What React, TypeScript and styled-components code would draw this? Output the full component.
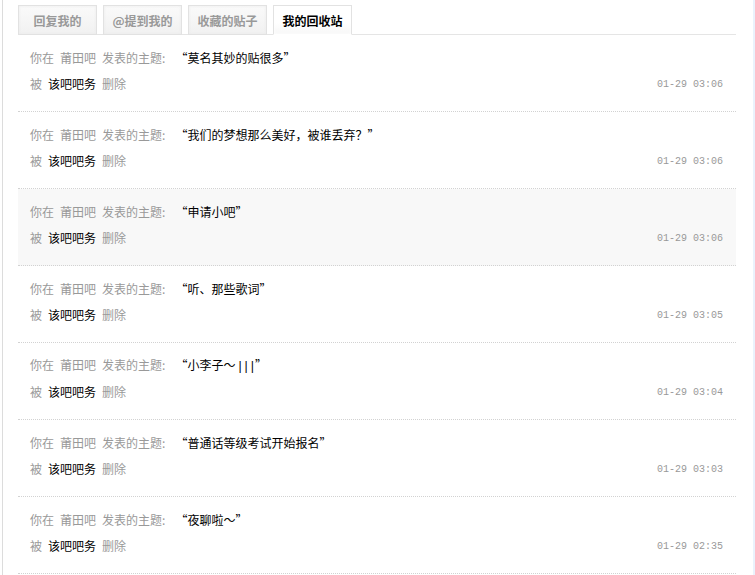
import type { ReactNode } from "react";
import styled, { createGlobalStyle } from "styled-components";

const GlobalStyle = createGlobalStyle`
  body {
    margin: 0;
    background: #fff;
    font-family: "Noto Sans CJK SC", "Noto Sans", sans-serif;
    font-size: 12px;
  }
`;

const Page = styled.div`
  display: flex;
  height: 575px;
  overflow: hidden;
`;

const Main = styled.div`
  margin-left: 2px;
  width: 718px;
  border-left: 1px solid #dcdcdc;
  padding: 0 16px 0 15px;
`;

const Side = styled.div`
  flex: 1;
  background: #eaf2fc;
  margin-left: 1px;
`;

const Tabs = styled.div`
  display: flex;
  gap: 6px;
  padding-top: 5px;
  border-bottom: 1px solid #e5e5e5;
`;

const Tab = styled.div<{ $active?: boolean }>`
  width: 77px;
  height: 28px;
  margin-bottom: -1px;
  border: 1px solid #e2e2e2;
  border-bottom-color: ${(p) => (p.$active ? "#fff" : "#e2e2e2")};
  background: ${(p) =>
    p.$active
      ? "linear-gradient(#fff, #fff 60%, #f7f7f7)"
      : "linear-gradient(#fafafa, #f1f1f1)"};
  box-shadow: inset 0 0 3px ${(p) => (p.$active ? "#fff" : "#eaeaea")};
  display: flex;
  align-items: center;
  justify-content: center;
  font-weight: bold;
  color: ${(p) => (p.$active ? "#000" : "#999")};
`;

const Row = styled.div<{ $hover?: boolean }>`
  padding: 10px 13px 14px 12px;
  border-bottom: 1px dotted #d2d2d2;
  background: ${(p) => (p.$hover ? "#f8f8f8" : "#fff")};
`;

const Line = styled.div`
  height: 26px;
  line-height: 26px;
  display: flex;
  align-items: center;
  justify-content: space-between;
  color: #999;
  white-space: nowrap;
`;

const Gray = styled.span`
  color: #999;
  margin-right: 6px;
`;

const Dark = styled.span`
  color: #000;
  margin-right: 6px;
`;

const Title = styled.span`
  color: #000;
  margin-left: 4px;
`;

const Pipes = styled.span`
  font-family: "Liberation Mono", monospace;
  font-size: 12px;
  letter-spacing: -1px;
  margin-left: 1px;
`;

const Time = styled.span`
  font-family: "Liberation Mono", "DejaVu Sans Mono", monospace;
  font-size: 10px;
  color: #999;
  position: relative;
  top: 1px;
`;

const items: { title: ReactNode; time: string; hover?: boolean }[] = [
  { title: "莫名其妙的贴很多", time: "01-29 03:06" },
  { title: "我们的梦想那么美好，被谁丢弃？", time: "01-29 03:06" },
  { title: "申请小吧", time: "01-29 03:06", hover: true },
  { title: "听、那些歌词", time: "01-29 03:05" },
  {
    title: (
      <>
        小李子～<Pipes>|||</Pipes>
      </>
    ),
    time: "01-29 03:04",
  },
  { title: "普通话等级考试开始报名", time: "01-29 03:03" },
  { title: "夜聊啦～", time: "01-29 02:35" },
];

export default function App() {
  return (
    <Page>
      <GlobalStyle />
      <Main>
        <Tabs>
          <Tab>回复我的</Tab>
          <Tab>@提到我的</Tab>
          <Tab>收藏的贴子</Tab>
          <Tab $active>我的回收站</Tab>
        </Tabs>
        {items.map((it, i) => (
          <Row key={i} $hover={it.hover}>
            <Line>
              <span>
                <Gray>你在</Gray>
                <Gray>莆田吧</Gray>
                <Gray>发表的主题:</Gray>
                <Title>“{it.title}”</Title>
              </span>
            </Line>
            <Line>
              <span>
                <Gray>被</Gray>
                <Dark>该吧吧务</Dark>
                <Gray>删除</Gray>
              </span>
              <Time>{it.time}</Time>
            </Line>
          </Row>
        ))}
      </Main>
      <Side />
    </Page>
  );
}
